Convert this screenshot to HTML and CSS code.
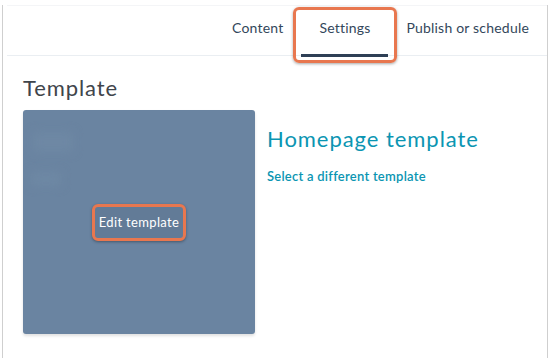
FILE: index.html
```html
<!DOCTYPE html>
<html lang="en">
<head>
  <meta charset="UTF-8" />
  <meta name="viewport" content="width=device-width, initial-scale=1.0"/>
  <title>Template settings</title>
  <link rel="stylesheet" href="styles.css">
</head>
<body>
<div class="frame">
  <div class="tabs">
    <div class="tab">Content</div>
    <div class="tab active">Settings<span class="callout"></span></div>
    <div class="tab">Publish or schedule</div>
  </div>
  <div class="content">
    <h2>Template</h2>
    <div class="template-row">
      <div class="preview">
        <div class="blur b1"></div>
        <div class="blur b2"></div>
        <div class="edit-btn">Edit template</div>
      </div>
      <div class="info">
        <h3>Homepage template</h3>
        <a class="link">Select a different template</a>
      </div>
    </div>
  </div>
</div>
</body>
</html>
```

FILE: styles.css
```css
* { box-sizing: border-box; margin: 0; padding: 0; }
body {
  font-family: Lato, "Open Sans", Arial, sans-serif;
  background: #fff;
  color: #33475b;
}

.frame {
  height: 357px;
  margin: 0 1px 1px 2px;
  border: 1px solid #cfcfcf;
  border-top: none;
}

.tabs {
  display: flex;
  justify-content: flex-end;
  margin: 5px 0 0 4px;
  height: 51px;
  border-top: 1px solid #f4f5f7;
  border-bottom: 1px solid #eaeef2;
}

.tab {
  position: relative;
  padding: 0 18px;
  font-size: 14px;
  line-height: 44px;
  letter-spacing: 0.2px;
  color: #33475b;
}

.tab.active::after {
  content: "";
  position: absolute;
  left: 0;
  right: 0;
  bottom: -2px;
  height: 3px;
  background: #2e3f55;
}

.callout {
  position: absolute;
  top: 1px;
  left: -8px;
  right: -9px;
  bottom: -8px;
  border: 3px solid #e8774f;
  border-radius: 6px;
  box-shadow: 0 1px 3px rgba(0,0,0,0.35);
}

.content {
  padding: 18px 0 0 20px;
}

h2 {
  font-size: 22px;
  font-weight: 400;
  letter-spacing: 0.9px;
  color: #3f454b;
  line-height: 28px;
  margin-bottom: 8px;
}

.template-row {
  display: flex;
  gap: 12px;
}

.preview {
  position: relative;
  width: 232px;
  height: 224px;
  background: #6a84a1;
  border-radius: 3px;
  box-shadow: 0 2px 3px rgba(0,0,0,0.12);
  display: flex;
  align-items: center;
  justify-content: center;
  overflow: hidden;
}

.blur {
  position: absolute;
  background: #6e88a4;
  filter: blur(5px);
  border-radius: 4px;
}
.b1 { left: 10px; top: 22px; width: 40px; height: 20px; }
.b2 { left: 8px; top: 62px; width: 30px; height: 14px; }

.edit-btn {
  position: relative;
  border: 3px solid #e8774f;
  border-radius: 6px;
  padding: 7px 4px 8px;
  font-size: 13px;
  letter-spacing: 0.35px;
  color: #fff;
  background: #627b97;
  box-shadow: 0 1px 3px rgba(0,0,0,0.35);
}

.info {
  padding-top: 15px;
}

h3 {
  font-size: 22px;
  font-weight: 400;
  letter-spacing: 0.95px;
  color: #0b95b2;
  line-height: 28px;
  margin-bottom: 12px;
}

.link {
  font-size: 13px;
  letter-spacing: 0.25px;
  color: #0b95b2;
  font-weight: 600;
}
```
